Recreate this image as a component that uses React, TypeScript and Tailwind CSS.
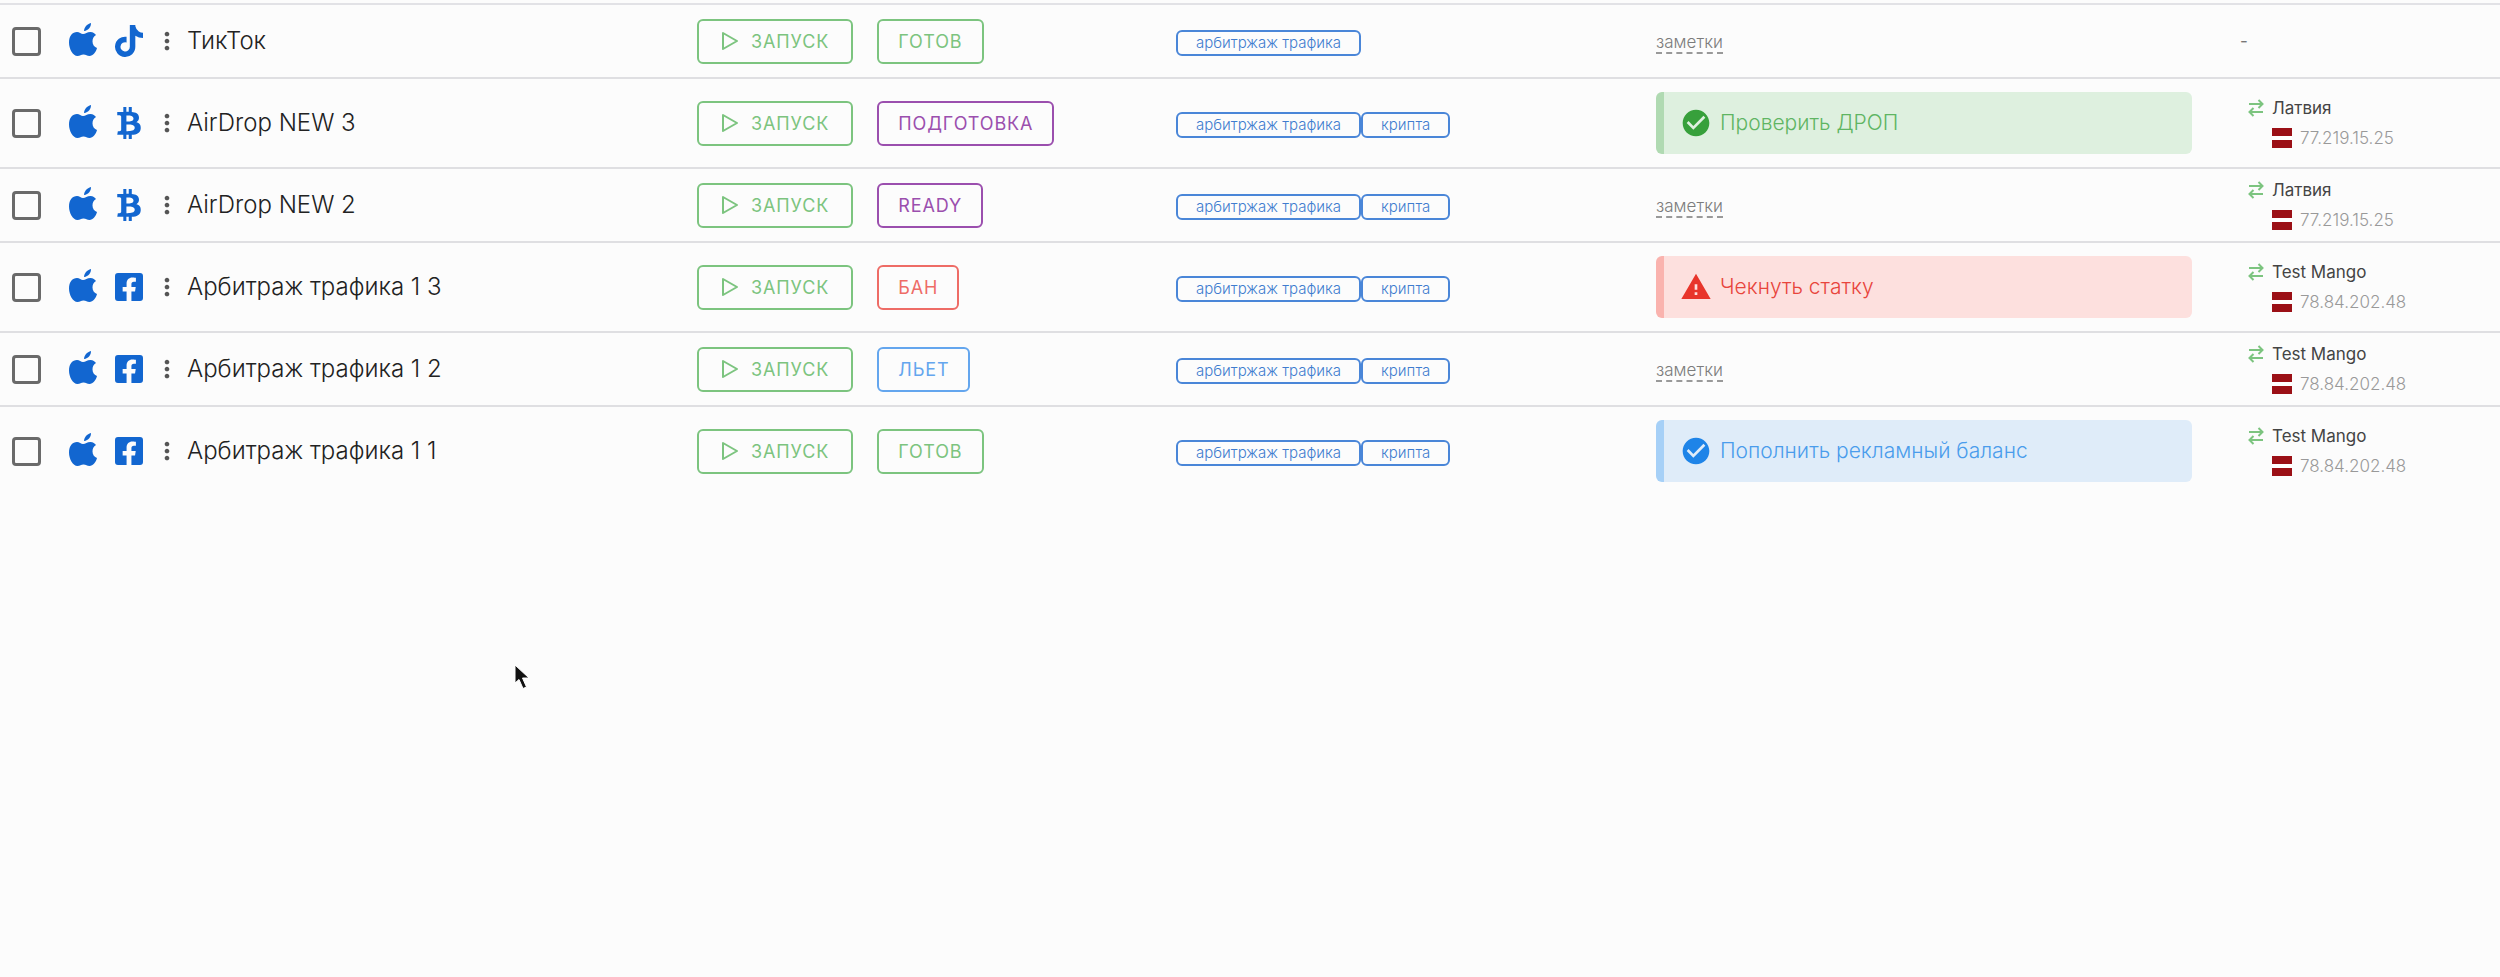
import type { ReactNode } from "react";
import { FaBtc, FaFacebookSquare, FaTiktok } from "react-icons/fa";
import { MdCheckCircle, MdMoreVert, MdWarning } from "react-icons/md";

type Note = { kind: "success" | "error" | "info"; text: string };
type Proxy = { name: string; ip: string };

interface Profile {
  id: number;
  name: string;
  site: "tiktok" | "bitcoin" | "facebook";
  status: string;
  statusColor: "green" | "purple" | "red" | "blue";
  tags: string[];
  note?: Note;
  proxy?: Proxy;
}

const latvia: Proxy = { name: "Латвия", ip: "77.219.15.25" };
const mango: Proxy = { name: "Test Mango", ip: "78.84.202.48" };

const profiles: Profile[] = [
  { id: 1, name: "ТикТок", site: "tiktok", status: "Готов", statusColor: "green", tags: ["арбитржаж трафика"] },
  {
    id: 2,
    name: "AirDrop NEW 3",
    site: "bitcoin",
    status: "Подготовка",
    statusColor: "purple",
    tags: ["арбитржаж трафика", "крипта"],
    note: { kind: "success", text: "Проверить ДРОП" },
    proxy: latvia,
  },
  {
    id: 3,
    name: "AirDrop NEW 2",
    site: "bitcoin",
    status: "Ready",
    statusColor: "purple",
    tags: ["арбитржаж трафика", "крипта"],
    proxy: latvia,
  },
  {
    id: 4,
    name: "Арбитраж трафика 1 3",
    site: "facebook",
    status: "Бан",
    statusColor: "red",
    tags: ["арбитржаж трафика", "крипта"],
    note: { kind: "error", text: "Чекнуть статку" },
    proxy: mango,
  },
  {
    id: 5,
    name: "Арбитраж трафика 1 2",
    site: "facebook",
    status: "Льет",
    statusColor: "blue",
    tags: ["арбитржаж трафика", "крипта"],
    proxy: mango,
  },
  {
    id: 6,
    name: "Арбитраж трафика 1 1",
    site: "facebook",
    status: "Готов",
    statusColor: "green",
    tags: ["арбитржаж трафика", "крипта"],
    note: { kind: "info", text: "Пополнить рекламный баланс" },
    proxy: mango,
  },
];

const statusStyles = {
  green: "border-[#7cc47f] text-[#7cc47f]",
  purple: "border-[#9b4fae] text-[#9b4fae]",
  red: "border-[#ee6c66] text-[#ee6c66]",
  blue: "border-[#64a6ee] text-[#64a6ee]",
};

const noteStyles = {
  success: "border-[#b0dab2] bg-[#def0df] text-[#5fb563]",
  error: "border-[#fab3ae] bg-[#fde0de] text-[#e8453c]",
  info: "border-[#a6d0f7] bg-[#dfecf9] text-[#4a9cec]",
};

const noteIcons = {
  success: <MdCheckCircle className="size-8 shrink-0 text-[#37a03b]" />,
  error: <MdWarning className="size-8 shrink-0 text-[#e8352b]" />,
  info: <MdCheckCircle className="size-8 shrink-0 text-[#1e84e8]" />,
};

const siteIcons = {
  tiktok: <FaTiktok className="size-8" />,
  bitcoin: <FaBtc className="size-8" />,
  facebook: <FaFacebookSquare className="size-8" />,
};

function AppleIcon() {
  return (
    <svg viewBox="0 0 28 36" className="h-9 w-7" fill="currentColor">
      <path d="M14 11c2.500 0 4-2 7.500-2 2.500 0 4.500 1.500 5.500 3-2.500 1.500-3.500 3.500-3.500 6.500 0 3.500 2 5.500 4.500 6.500-1 4-4 8-7.500 8-2.500 0-3.500-1.500-6-1.500S11 33 8.500 33C4 33 0 26 0 19.500 0 13 3.500 9 8 9c2.500 0 4 2 6 2z" />
      <path d="M15 8c0-3.500 3-7 7-8 .2 3.500-2.500 7.500-7 8z" />
    </svg>
  );
}

function Cell({ children, className = "" }: { children: ReactNode; className?: string }) {
  return (
    <td className={`border-b-2 border-[#dfdfe2] py-1.5 align-middle group-last:border-transparent ${className}`}>
      {children}
    </td>
  );
}

function NoteCell({ note }: { note?: Note }) {
  if (!note) {
    return (
      <button type="button" className="mt-1 border-b-2 border-dashed border-[#999] text-[17px] font-light leading-5 text-[#7c7c7c] cursor-pointer">
        заметки
      </button>
    );
  }
  return (
    <div className={`my-[7px] flex h-[62px] items-center gap-2 rounded-md border-l-8 pl-4 text-[21px] font-light ${noteStyles[note.kind]}`}>
      {noteIcons[note.kind]}
      <span>{note.text}</span>
    </div>
  );
}

function ProxyCell({ proxy }: { proxy?: Proxy }) {
  if (!proxy) {
    return <div className="h-[60px] text-[17px] leading-[60px] text-[#777]">-</div>;
  }
  return (
    <div className="grid grid-cols-[16px_1fr] gap-x-2 pl-2 text-[17px] leading-[30px]">
      <svg viewBox="0 0 16 18" className="h-[18px] w-4 self-center" fill="none" stroke="#7cc47f" strokeWidth="2">
        <path d="M1 5h13M10.500 1l4 4-4 4M15 13H2M5.500 9l-4 4 4 4" />
      </svg>
      <span className="text-[#444]">{proxy.name}</span>
      <span className="col-start-2 flex items-center gap-2 font-light text-[#999]">
        <svg viewBox="0 0 20 20" className="size-5" aria-label="LV">
          <rect width="20" height="20" fill="#fff" />
          <rect width="20" height="8" fill="#9b1016" />
          <rect y="12" width="20" height="8" fill="#9b1016" />
        </svg>
        {proxy.ip}
      </span>
    </div>
  );
}

function ProfileRow({ profile }: { profile: Profile }) {
  return (
    <tr className="group">
      <Cell>
        <div className="flex items-center pl-3">
          <input
            id={`profile-${profile.id}`}
            type="checkbox"
            className="size-[29px] appearance-none rounded border-[3px] border-[#6a6a6a] checked:bg-[#1565c8] cursor-pointer"
          />
          <div className="ml-7 flex items-center gap-4 text-[#1266d0]">
            <AppleIcon />
            {siteIcons[profile.site]}
          </div>
          <button type="button" aria-label="Меню" className="ml-2 text-[#555] cursor-pointer">
            <MdMoreVert className="size-7" />
          </button>
          <label htmlFor={`profile-${profile.id}`} className="ml-1.5 text-2xl font-light text-[#222]">
            {profile.name}
          </label>
        </div>
      </Cell>
      <Cell>
        <div className="flex items-center gap-6 text-lg leading-[41px] tracking-wider uppercase">
          <button
            type="button"
            className="flex items-center gap-3 rounded-md border-2 border-[#7cc47f] px-[22px] text-[#7cc47f] uppercase cursor-pointer"
          >
            <svg viewBox="0 0 18 20" className="h-5 w-[18px]" fill="none" stroke="currentColor" strokeWidth="2" strokeLinejoin="round">
              <path d="M2 2l14 8-14 8z" />
            </svg>
            Запуск
          </button>
          <button type="button" className={`rounded-md border-2 px-[19px] uppercase cursor-pointer ${statusStyles[profile.statusColor]}`}>
            {profile.status}
          </button>
        </div>
      </Cell>
      <Cell>
        <div className="flex pt-1">
          {profile.tags.map((tag) => (
            <span key={tag} className="rounded-md border-2 border-[#4a86d8] px-[18px] text-[15px] font-light leading-[22px] text-[#3f7ccf]">
              {tag}
            </span>
          ))}
        </div>
      </Cell>
      <Cell>
        <NoteCell note={profile.note} />
      </Cell>
      <Cell className="pl-12">
        <ProxyCell proxy={profile.proxy} />
      </Cell>
    </tr>
  );
}

function Cursor() {
  return (
    <svg viewBox="0 0 16 26" className="pointer-events-none absolute top-[664px] left-[514px] h-[26px] w-4">
      <path d="M1 1v18l4-3.500 4 9 3.500-1.500-4-9H15z" fill="#111" stroke="#fff" strokeWidth="1" />
    </svg>
  );
}

export default function App() {
  return (
    <main className="relative min-h-screen bg-[#fcfcfc] pt-[3px] font-['Inter',sans-serif]">
      <table className="w-full table-fixed border-separate border-spacing-0 border-t-2 border-[#e2e2e6]">
        <colgroup>
          <col />
          <col className="w-[479px]" />
          <col className="w-[480px]" />
          <col className="w-[536px]" />
          <col className="w-[308px]" />
        </colgroup>
        <tbody>
          {profiles.map((profile) => (
            <ProfileRow key={profile.id} profile={profile} />
          ))}
        </tbody>
      </table>
      <Cursor />
    </main>
  );
}
